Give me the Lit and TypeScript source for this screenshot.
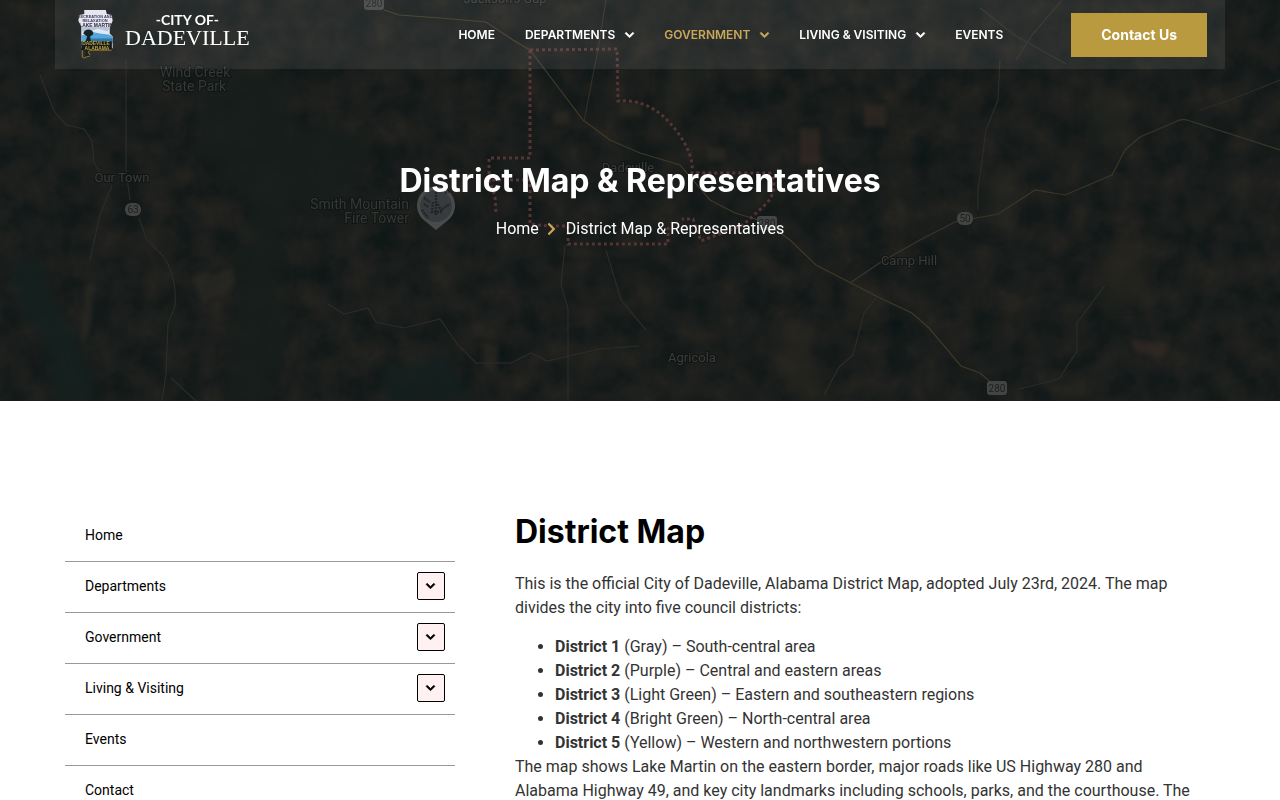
import { LitElement, html, css, svg } from "lit";
import { customElement, state } from "lit/decorators.js";

const chevronDown = svg`<path fill="currentColor" stroke="currentColor" stroke-width="36" d="M207.029 381.476L12.686 187.132c-9.373-9.373-9.373-24.569 0-33.941l22.667-22.667c9.357-9.357 24.522-9.375 33.901-.04L224 284.505l154.745-154.021c9.379-9.335 24.544-9.317 33.901.04l22.667 22.667c9.373 9.373 9.373 24.569 0 33.941L240.971 381.476c-9.373 9.372-24.569 9.372-33.942 0z"/>`;
const chevronRight = svg`<path fill="currentColor" d="M285.476 272.971L91.132 467.314c-9.373 9.373-24.569 9.373-33.941 0l-22.667-22.667c-9.357-9.357-9.375-24.522-.04-33.901L188.505 256 34.484 101.255c-9.335-9.379-9.317-24.544.04-33.901l22.667-22.667c9.373-9.373 24.569-9.373 33.941 0L285.475 239.03c9.373 9.372 9.373 24.568.001 33.941z"/>`;

interface NavItem {
  label: string;
  menu?: boolean;
  active?: boolean;
}

const NAV: NavItem[] = [
  { label: "Home" },
  { label: "Departments", menu: true },
  { label: "Government", menu: true, active: true },
  { label: "Living & Visiting", menu: true },
  { label: "Events" },
];

const DISTRICTS = [
  ["District 1", "(Gray) – South-central area"],
  ["District 2", "(Purple) – Central and eastern areas"],
  ["District 3", "(Light Green) – Eastern and southeastern regions"],
  ["District 4", "(Bright Green) – North-central area"],
  ["District 5", "(Yellow) – Western and northwestern portions"],
];

@customElement("satellite-map")
export class SatelliteMap extends LitElement {
  static styles = css`
    :host { display: block; }
    .map { display: block; width: 100%; height: 100%; }
    .label { font: 13px Roboto, sans-serif; fill: #393d3b; stroke: #121514; stroke-width: 2px; paint-order: stroke; }
    .park { font-size: 14px; fill: #323a35; }
    .small { font: 10px Roboto, sans-serif; fill: #1c1f1e; }
  `;

  render() {
    return html`<svg class="map" viewBox="0 0 1280 401" preserveAspectRatio="xMidYMid slice" aria-hidden="true">
      <defs>
        <filter id="ground" x="0" y="0" width="100%" height="100%" color-interpolation-filters="sRGB">
          <feTurbulence type="fractalNoise" baseFrequency="0.035" numOctaves="5" seed="8"/>
          <feColorMatrix values="0.12 0 0 0 0.042  0.07 0 0 0 0.08  0.05 0 0 0 0.082  0 0 0 0 1"/>
        </filter>
        <filter id="soft" color-interpolation-filters="sRGB"><feGaussianBlur stdDeviation="2"/></filter>
        <filter id="softer" color-interpolation-filters="sRGB"><feGaussianBlur stdDeviation="7"/></filter>
      </defs>
      <rect width="1280" height="401" fill="#1a1e1c"/>
      <rect width="1280" height="401" filter="url(#ground)"/>
      <g filter="url(#softer)">
        <path fill="#14201f" opacity=".9" d="M12 262l30-4 8 40 30 44 18 59H54l-8-60-28-38z"/>
        <path fill="#161e1c" opacity=".8" d="M200 90l50-20 45 10-8 60 50-20 33 25-30 55-50 10-10 60 6 70-16 61h-44l10-80-4-50 20-30-8-50-40-30z"/>
        <path fill="#14201f" opacity=".8" d="M385 370l60-18 26 49h-90z"/>
        <path fill="#2a2923" opacity=".5" d="M665 65l40-10-20 50-22 12zM985 170h30v60h-30zM1090 80l40 20-10 60-30-20z"/>
        <path fill="#2c2822" opacity=".6" d="M1106 240h40v60h-40zM785 320l34 10-10 34 25 37h-30l-30-40zM850 274l26 10v34h-26z"/>
      </g>
      <g filter="url(#soft)">
        <path fill="#2f2b26" opacity=".6" d="M193 277l12-7 8 5 20-8 2 16-6 10-14 4-12 8-6-12zM85 288l8-6-1 30-2 20-8 14-3-10 4-20z"/>
        <path fill="#352a25" opacity=".7" d="M864 105h22v22h-22zM800 128h20v36h-20zM1130 340l40 4-10 14-24-6z"/>
        <path fill="#302b25" opacity=".6" d="M620 102h22v14h-22zM553 112h16v12h-16zM708 148h18v12h-18zM482 342l16 5-2 26-12-4z"/>
      </g>
      <g fill="none" stroke="#2c2c28" stroke-width="1.2">
        <path d="M40 75l14 36 12 14 18 4 8 12 2 22 9 14M126 60v110l4 30M112 185l-12 30-10 45M139 218l8 22 16 16q14 20 12 50l-7 18-2 50-4 27M171 378l25 23"/>
        <path d="M328 304l16 10 24-6 8 14 28 6 36-9 18 26 18 18h35l20-10 16 8 52-12 40-3M565 245l-4 40 7 24v92M606 250l15 50 25 30"/>
        <path stroke="#403827" d="M384 10l15 5 41 3 46 4 27 18 17 10 53 70 27 20 30 13 40 12 30 35 25 13 30 9 25 18 26 25 35 18 27 14 34 16 17 15 32 38 19 7 12 10"/>
        <path stroke="#332f25" d="M606 0l-8 50-6 30-8 42"/>
        <path stroke="#3b3528" d="M850 283l31-21 39-22 35-18 43-8 37-24 30 5 47-20 13-25 15-13 35-15q7-4 15-1l90 29"/>
        <path d="M877 297l-13 16-11 42-14 12-15 28M1000 60l-2 40-12 30-8 60v20M1105 285l-28 38v28l-18 28-40 10M1280 80l-50 20-30 10M980 8l36 28 50 28M1062 0l-30 35-16 25"/>
      </g>
      <g fill="none" stroke="#553435" stroke-width="3" stroke-dasharray="3 3">
        <path d="M530 50l87-1 1 52q35-3 60 32 16 22 14 40h78q10 16-5 32l-22 20-42 16-8-22H682"/>
        <path d="M530 50v108h-41v22h41v44l18 2h20v18h100v-20M489 180l6 16 1 16"/>
      </g>
      <path fill="#484b4a" d="M436 230l-11-9a19 19 0 1 1 22 0z"/>
      <circle cx="436" cy="206" r="16" fill="#383b3e"/>
      <path stroke="#1b1f1f" stroke-width="2.4" stroke-dasharray="2 1" fill="none" opacity=".8" d="M424 198l6 4m-8 8l6 8m8-26v24m-3-14l-1 10h10l-5-9m8-10l5-2m-26 13l4 3m14 2l8-5"/>
      <g text-anchor="middle">
        <text class="label" x="505" y="3">Jackson's Gap</text>
        <text class="label park" x="195" y="77">Wind Creek</text>
        <text class="label park" x="194" y="91">State Park</text>
        <text class="label" x="122" y="182">Our Town</text>
        <text class="label" x="628" y="172">Dadeville</text>
        <text class="label" x="909" y="265">Camp Hill</text>
        <text class="label" x="692" y="362">Agricola</text>
      </g>
      <g text-anchor="end">
        <text class="label park" x="409" y="209">Smith Mountain</text>
        <text class="label park" x="409" y="223">Fire Tower</text>
      </g>
      <g fill="#424544">
        <rect x="125" y="203" width="16" height="13" rx="6"/>
        <rect x="957" y="212" width="16" height="13" rx="6"/>
        <rect x="364" y="-4" width="20" height="14" rx="3"/>
        <rect x="757" y="216" width="20" height="14" rx="3"/>
        <rect x="987" y="381" width="20" height="14" rx="3"/>
      </g>
      <g text-anchor="middle">
        <text class="small" x="133" y="213">63</text>
        <text class="small" x="965" y="222">50</text>
        <text class="small" x="374" y="7">280</text>
        <text class="small" x="767" y="227">280</text>
        <text class="small" x="997" y="392">280</text>
      </g>
    </svg>`;
  }
}

@customElement("city-logo")
export class CityLogo extends LitElement {
  static styles = css`
    :host { display: block; }
    .logo { display: flex; align-items: flex-start; gap: 11px; color: #fff; text-decoration: none; }
    .seal { display: block; width: 36px; height: 49px; }
    .words { display: flex; flex-direction: column; align-items: center; }
    .over { font: 700 14px/20px Lato, sans-serif; }
    .name { font: 22px/16px "Liberation Serif", serif; }
    .band { font: 700 5px "Liberation Sans", sans-serif; }
    .motto { font-size: 4px; }
  `;

  render() {
    return html`<a class="logo" href="#home" aria-label="City of Dadeville">
      <svg class="seal" viewBox="0 0 36 50" aria-hidden="true">
        <path fill="#e8e5ef" d="M6 0h22l1 4 5 1 1 6-3 7v6l3 3v12H3V17L0 11l1-6 5-1z"/>
        <path fill="#b9c4da" d="M4 17h28l-2 5H4z"/>
        <path fill="#58a5dc" d="M3 26l14-4 14 3 4 2v6H3z"/>
        <path fill="#2f79ad" d="M13 29h22v5H13z"/>
        <path fill="#dfe9f4" d="M12 22l8-3 10 3v3l-8-1z"/>
        <path fill="#172225" d="M5 24q1-4 6-4 5 1 4 5l-3 2 1 5 21 1v7H10v5l3 2-3 2-3-2V33l2-6z"/>
        <path fill="#131b1e" d="M3 32h31v9H3z"/>
        <path fill="none" stroke="#b49432" stroke-width=".8" d="M12 46l-2-3 2-2h22M4 41v7q2 2 4 0l4-1"/>
        <g class="band" text-anchor="middle">
          <text class="motto" x="17" y="8" fill="#3b4062">RECREATION AND</text>
          <text class="motto" x="17" y="12" fill="#3b4062">RELAXATION</text>
          <text x="18" y="17" fill="#252a3c">LAKE MARTIN</text>
          <text x="18" y="36" fill="#c2a23e">DADEVILLE</text>
          <text x="19" y="41" fill="#c2a23e">ALABAMA</text>
        </g>
      </svg>
      <span class="words"><span class="over">-CITY OF-</span><span class="name">DADEVILLE</span></span>
    </a>`;
  }
}

@customElement("app-root")
export class AppRoot extends LitElement {
  @state() private open = "";

  static styles = css`
    :host { display: block; background: #fff; color: #333; font: 16px/24px Roboto, sans-serif; }
    * { box-sizing: border-box; }
    .hero { position: relative; min-height: 401px; color: #fff; background: #1a1e1c; }
    .backdrop { position: absolute; inset: 0; overflow: hidden; }
    .wrap { max-width: 1170px; margin: 0 auto; }
    .bar { position: relative; display: flex; align-items: center; padding: 10px 18px 10px 23px; background: rgba(255, 255, 255, 0.08); }
    .nav { flex: 1; display: flex; justify-content: flex-end; gap: 30px; margin-right: 68px; }
    .nav-link { display: flex; align-items: center; gap: 10px; color: #fff; font: 600 12px/20px Inter, sans-serif; text-transform: uppercase; text-decoration: none; }
    .nav-link.active { color: #c9a75a; }
    .caret { display: block; width: 9px; height: 10px; overflow: visible; }
    .cta { display: block; padding: 12px 30px; background: #b99a3e; color: #fff; font: 700 14px/20px Inter, sans-serif; text-decoration: none; }
    .intro { position: relative; display: flex; flex-direction: column; align-items: center; gap: 16px; padding: 92px 10px 0; }
    .title { margin: 0; font: 700 32px/40px Inter, sans-serif; }
    .crumbs { display: flex; align-items: center; gap: 8px; }
    .crumb { color: #fff; text-decoration: none; }
    .crumb-icon { display: block; width: 9px; height: 14px; color: #c9a75a; }
    .here { padding-left: 2px; }
    .content { display: grid; grid-template-columns: 390px 1fr; gap: 60px; padding: 110px 10px 40px; align-items: start; }
    .side { list-style: none; margin: 0; padding: 0; }
    .row { display: flex; align-items: center; justify-content: space-between; min-height: 51px; padding: 0 10px 2px 20px; border-bottom: 1px solid #999; }
    .row:last-child { border-bottom-color: transparent; }
    .side-link { color: #000; font-size: 14px; line-height: 20px; text-decoration: none; }
    .toggle { display: grid; place-items: center; width: 28px; height: 28px; padding: 0 1px 1px 0; border: 1px solid #000; border-radius: 2px; background: #fff1f1; color: #000; cursor: pointer; }
    .article { padding: 1px 10px 0 0; }
    .heading { margin: 0; font: 700 32px/40px Inter, sans-serif; color: #000; }
    .text { margin: 20px 0 15px; }
    .list { margin: 0; padding-left: 40px; }
    .rest { margin: 0; }
  `;

  private toggle(label: string) {
    this.open = this.open === label ? "" : label;
  }

  render() {
    const down = html`<svg class="caret" viewBox="0 0 448 512" aria-hidden="true">${chevronDown}</svg>`;
    return html`
      <header class="hero">
        <satellite-map class="backdrop"></satellite-map>
        <div class="wrap bar">
          <city-logo></city-logo>
          <nav class="nav" aria-label="Main">
            ${NAV.map((n) => html`<a class="nav-link ${n.active ? "active" : ""}" href="#">${n.label}${n.menu ? down : ""}</a>`)}
          </nav>
          <a class="cta" href="#contact">Contact Us</a>
        </div>
        <div class="wrap intro">
          <h1 class="title">District Map &amp; Representatives</h1>
          <nav class="crumbs" aria-label="Breadcrumb">
            <a class="crumb" href="#home">Home</a>
            <svg class="crumb-icon" viewBox="0 0 320 512" aria-hidden="true">${chevronRight}</svg>
            <span class="here">District Map &amp; Representatives</span>
          </nav>
        </div>
      </header>
      <main class="wrap content">
        <ul class="side">
          ${[...NAV, { label: "Contact" } as NavItem].map(
            (n) => html`<li class="row">
              <a class="side-link" href="#">${n.label}</a>
              ${n.menu
                ? html`<button class="toggle" aria-label="Toggle ${n.label}" aria-expanded=${this.open === n.label} @click=${() => this.toggle(n.label)}>${down}</button>`
                : ""}
            </li>`
          )}
        </ul>
        <article class="article">
          <h2 class="heading">District Map</h2>
          <p class="text">This is the official City of Dadeville, Alabama District Map, adopted July 23rd, 2024. The map divides the city into five council districts:</p>
          <ul class="list">
            ${DISTRICTS.map(([name, where]) => html`<li><strong>${name}</strong> ${where}</li>`)}
          </ul>
          <p class="rest">The map shows Lake Martin on the eastern border, major roads like US Highway 280 and Alabama Highway 49, and key city landmarks including schools, parks, and the courthouse. The</p>
        </article>
      </main>
    `;
  }
}
